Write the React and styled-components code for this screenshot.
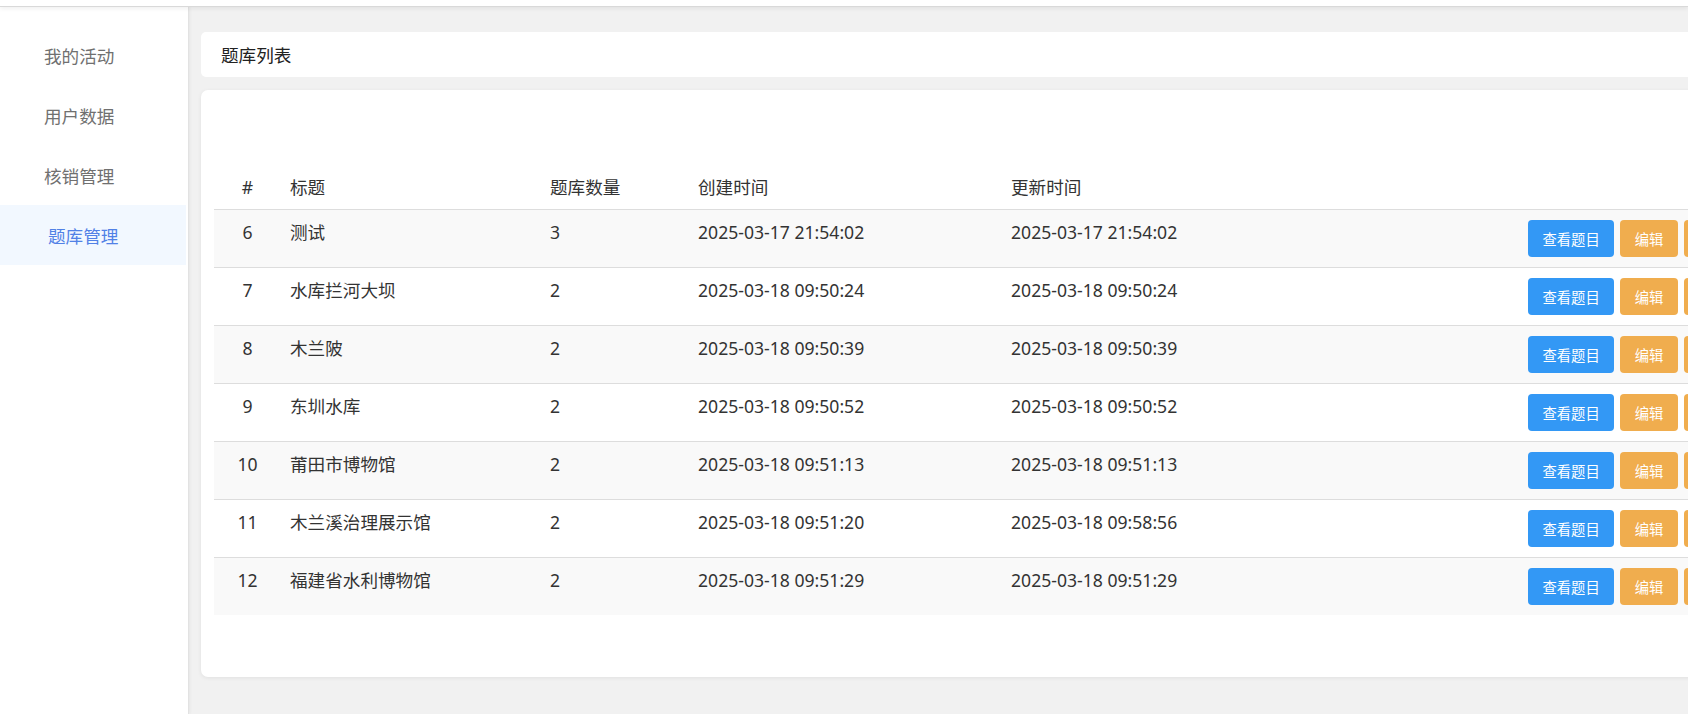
import React from "react";
import styled, { createGlobalStyle } from "styled-components";

const GlobalStyle = createGlobalStyle`
  html, body {
    margin: 0;
    padding: 0;
    background: #f1f1f1;
    overflow: hidden;
    font-family: "Noto Sans", "Noto Sans CJK SC", sans-serif;
  }
  * { box-sizing: border-box; }
`;

const Page = styled.div`
  display: flex;
  flex-direction: column;
  height: 714px;
  width: 1688px;
  overflow: hidden;
`;

const TopBar = styled.div`
  height: 7px;
  flex: none;
  background: #fff;
  border-bottom: 1px solid #d9d9d9;
  box-shadow: 0 2px 4px rgba(0, 0, 0, 0.06);
  position: relative;
  z-index: 2;
`;

const Body = styled.div`
  display: flex;
  flex: 1;
  min-height: 0;
`;

const Sidebar = styled.nav`
  width: 189px;
  flex: none;
  background: #fff;
  border-right: 1px solid #e2e2e2;
  box-shadow: 1px 0 3px rgba(0, 0, 0, 0.05);
  padding-top: 18px;
  display: flex;
  flex-direction: column;
`;

const MenuItem = styled.div`
  height: 60px;
  width: 186px;
  display: flex;
  align-items: center;
  padding-left: ${(p) => (p.$active ? "48px" : "44px")};
  font-size: 17.6px;
  color: ${(p) => (p.$active ? "#5181e6" : "#707070")};
  background: ${(p) => (p.$active ? "#f2f8ff" : "transparent")};
  cursor: pointer;
`;

const Main = styled.main`
  flex: 1;
  min-width: 0;
  padding: 25px 0 0 12px;
  display: flex;
  flex-direction: column;
  gap: 13px;
`;

const TitleCard = styled.div`
  width: 1561px;
  height: 45px;
  flex: none;
  background: #fff;
  border-radius: 5px;
  display: flex;
  align-items: center;
  padding-left: 20px;
  font-size: 17.6px;
  color: #222;
`;

const Card = styled.section`
  width: 1561px;
  flex: none;
  background: #fff;
  border-radius: 7px;
  box-shadow: 0 1px 4px rgba(0, 0, 0, 0.07);
  padding: 74px 13px 62px;
`;

const Table = styled.table`
  border-collapse: collapse;
  table-layout: fixed;
  width: 1535px;
  font-size: 17.6px;
  color: #333;
`;

const Th = styled.th`
  font-weight: normal;
  text-align: ${(p) => p.$align || "left"};
  padding: 11px 9px 10px;
  line-height: 24px;
  color: #333;
`;

const Tr = styled.tr`
  background: ${(p) => (p.$striped ? "#f9f9f9" : "#fff")};
`;

const Td = styled.td`
  text-align: ${(p) => p.$align || "left"};
  vertical-align: top;
  padding: 10px 9px;
  line-height: 24px;
  border-top: 1px solid #dddddd;
  white-space: nowrap;
`;

const Actions = styled.div`
  display: flex;
  gap: 6px;
`;

const Button = styled.button`
  height: 37px;
  padding: 0 14.5px;
  border: none;
  border-radius: 4px;
  font-family: inherit;
  font-size: 14.3px;
  color: #fff;
  background: ${(p) => (p.$variant === "primary" ? "#3398f5" : "#f0ad4e")};
  white-space: nowrap;
  cursor: pointer;
`;

const menu = ["我的活动", "用户数据", "核销管理", "题库管理"];

const rows = [
  { id: 6, title: "测试", count: 3, created: "2025-03-17 21:54:02", updated: "2025-03-17 21:54:02" },
  { id: 7, title: "水库拦河大坝", count: 2, created: "2025-03-18 09:50:24", updated: "2025-03-18 09:50:24" },
  { id: 8, title: "木兰陂", count: 2, created: "2025-03-18 09:50:39", updated: "2025-03-18 09:50:39" },
  { id: 9, title: "东圳水库", count: 2, created: "2025-03-18 09:50:52", updated: "2025-03-18 09:50:52" },
  { id: 10, title: "莆田市博物馆", count: 2, created: "2025-03-18 09:51:13", updated: "2025-03-18 09:51:13" },
  { id: 11, title: "木兰溪治理展示馆", count: 2, created: "2025-03-18 09:51:20", updated: "2025-03-18 09:58:56" },
  { id: 12, title: "福建省水利博物馆", count: 2, created: "2025-03-18 09:51:29", updated: "2025-03-18 09:51:29" },
];

export default function App() {
  return (
    <>
      <GlobalStyle />
      <Page>
        <TopBar />
        <Body>
          <Sidebar>
            {menu.map((m) => (
              <MenuItem key={m} $active={m === "题库管理"}>
                {m}
              </MenuItem>
            ))}
          </Sidebar>
          <Main>
            <TitleCard>题库列表</TitleCard>
            <Card>
              <Table>
                <colgroup>
                  <col style={{ width: 67 }} />
                  <col style={{ width: 260 }} />
                  <col style={{ width: 148 }} />
                  <col style={{ width: 313 }} />
                  <col style={{ width: 517 }} />
                  <col style={{ width: 230 }} />
                </colgroup>
                <thead>
                  <tr>
                    <Th $align="center">#</Th>
                    <Th>标题</Th>
                    <Th>题库数量</Th>
                    <Th>创建时间</Th>
                    <Th>更新时间</Th>
                    <Th></Th>
                  </tr>
                </thead>
                <tbody>
                  {rows.map((r, i) => (
                    <Tr key={r.id} $striped={i % 2 === 0}>
                      <Td $align="center">{r.id}</Td>
                      <Td>{r.title}</Td>
                      <Td>{r.count}</Td>
                      <Td>{r.created}</Td>
                      <Td>{r.updated}</Td>
                      <Td>
                        <Actions>
                          <Button $variant="primary">查看题目</Button>
                          <Button>编辑</Button>
                          <Button>删除</Button>
                        </Actions>
                      </Td>
                    </Tr>
                  ))}
                </tbody>
              </Table>
            </Card>
          </Main>
        </Body>
      </Page>
    </>
  );
}
